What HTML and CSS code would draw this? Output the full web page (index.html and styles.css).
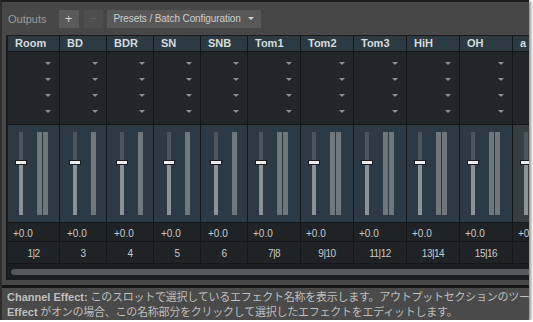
FILE: index.html
```html
<!DOCTYPE html>
<html lang="ja">
<head>
    <meta charset="UTF-8">
    <meta name="viewport" content="width=device-width, initial-scale=1.0">
    <title>Outputs</title>
    <link rel="stylesheet" href="styles.css">
</head>
<body>
    <div class="window">
        <div class="toolbar">
            <span class="label">Outputs</span>
            <button class="tb-btn">+</button>
            <button class="tb-btn off">&minus;</button>
            <button class="preset-btn">Presets / Batch Configuration<span class="caret"></span></button>
        </div>

        <div class="mixer">
            <div class="strips" id="strips"></div>
            <div class="scroll-row"><div class="scroll-bar"></div></div>
        </div>

        <div class="help">
            <p><b>Channel Effect:</b> このスロットで選択しているエフェクト名称を表示します。アウトプットセクションのツー</p>
            <p><b>Effect</b> がオンの場合、この名称部分をクリックして選択したエフェクトをエディットします。</p>
        </div>
    </div>

    <script>
        const strips = document.getElementById('strips');

        const channels = [
            ['Room', '1|2', 'room'],
            ['BD', '3', 'mono'],
            ['BDR', '4', 'mono'],
            ['SN', '5', 'mono'],
            ['SNB', '6', 'mono'],
            ['Tom1', '7|8', 'stereo'],
            ['Tom2', '9|10', 'stereo'],
            ['Tom3', '11|12', 'stereo'],
            ['HiH', '13|14', 'stereo'],
            ['OH', '15|16', 'stereo'],
            ['a', '', 'aux']
        ];

        channels.forEach(([name, out, type]) => {
            const strip = document.createElement('div');
            strip.className = 'strip ' + type;

            const meters = type === 'mono' ? 1 : 2;
            let meterHtml = '';
            for (let i = 0; i < meters; i++) {
                meterHtml += '<div class="meter"></div>';
            }

            strip.innerHTML = `
                <div class="name">${name}</div>
                <div class="sends">
                    <span class="drop"></span>
                    <span class="drop"></span>
                    <span class="drop"></span>
                    <span class="drop"></span>
                </div>
                <div class="fader-area">
                    <div class="fader"><div class="thumb"></div></div>
                    <div class="meters">${meterHtml}</div>
                </div>
                <div class="value">${type === 'aux' ? '+0' : '+0.0'}</div>
                <div class="out">${out}</div>`;

            strips.appendChild(strip);
        });
    </script>
</body>
</html>
```

FILE: styles.css
```css
body {
    margin: 0;
    background: #fff;
    font-family: "Liberation Sans", Arial, sans-serif;
}

.window {
    width: 527px;
    height: 318px;
    background: #474747;
    border-top: 2px solid #1d1d1d;
    border-left: 2px solid #2e2e2e;
    overflow: hidden;
    box-shadow: 2px 1px 3px rgba(0, 0, 0, 0.45);
}

/* toolbar */

.toolbar {
    display: flex;
    align-items: center;
    height: 33px;
    padding-left: 6px;
}

.label {
    color: #9c9c9c;
    font-size: 11px;
    margin-right: 12px;
}

.tb-btn {
    width: 20px;
    height: 18px;
    margin: 0 5px 0 0;
    padding: 0;
    border: none;
    background: #5a5a5a;
    color: #cfcfcf;
    font-family: "Liberation Sans", Arial, sans-serif;
    font-size: 13px;
    line-height: 18px;
}

.tb-btn.off {
    width: 19px;
    margin-right: 4px;
    background: #4e4e4e;
    color: #5f5f5f;
}

.preset-btn {
    display: flex;
    align-items: center;
    height: 18px;
    width: 154px;
    padding: 0 0 0 7px;
    border: none;
    background: #585858;
    color: #cdcdcd;
    font-family: "Liberation Sans", Arial, sans-serif;
    font-size: 10px;
    letter-spacing: -0.1px;
    white-space: nowrap;
}

.caret {
    margin-left: 7px;
    border-left: 3px solid transparent;
    border-right: 3px solid transparent;
    border-top: 3px solid #cfcfcf;
}

/* mixer */

.mixer {
    margin-left: 4px;
    border-left: 2px solid #1a1a1a;
    border-top: 1px solid #1a1a1a;
    background: #1d2023;
}

.strips {
    display: flex;
    overflow: hidden;
}

.strip {
    flex: none;
    box-sizing: border-box;
    border-right: 1px solid #14171a;
    display: flex;
    flex-direction: column;
}

.strip.room { width: 52px; }
.strip.mono { width: 47px; }
.strip.stereo { width: 53px; }
.strip.aux { width: 53px; }

.name {
    height: 15px;
    line-height: 15px;
    padding-left: 7px;
    background: #2c3a43;
    color: #d5dadd;
    font-size: 11px;
    font-weight: bold;
    white-space: nowrap;
}

.sends {
    height: 73px;
    box-sizing: border-box;
    padding: 4px 0 5px;
    background: #212629;
    border-top: 1px solid #15181a;
    display: flex;
    flex-direction: column;
}

.drop {
    height: 16px;
    display: flex;
    align-items: center;
    justify-content: flex-end;
    padding-right: 8px;
}

.drop::after {
    content: "";
    border-left: 3px solid transparent;
    border-right: 3px solid transparent;
    border-top: 3px solid #8a9196;
}

.fader-area {
    height: 98px;
    box-sizing: border-box;
    padding: 7px 0 7px 11px;
    background: #2b3a44;
    border-top: 1px solid #15181a;
    display: flex;
}

.strip.mono .fader-area {
    padding-left: 13px;
}

.strip.aux .fader-area {
    background: #383d40;
}

.fader {
    position: relative;
    width: 4px;
    background: linear-gradient(to bottom, #4b555b 0 30px, #8c9397 30px);
    margin-right: 14px;
}

.thumb {
    position: absolute;
    top: 28px;
    left: -4px;
    width: 10px;
    height: 3px;
    background: #ececec;
    border: 1px solid #1b1f22;
}

.meters {
    display: flex;
    gap: 1px;
}

.meter {
    width: 5px;
    background: #6f777b;
}

.value {
    height: 18px;
    line-height: 22px;
    padding-left: 5px;
    background: #1f2326;
    border-top: 1px solid #15181a;
    color: #c6cacc;
    font-size: 10px;
    white-space: nowrap;
}

.strip.mono .value {
    padding-left: 7px;
}

.out {
    height: 21px;
    line-height: 24px;
    text-align: center;
    background: #1f2326;
    border-top: 1px solid #15181a;
    color: #c6cacc;
    font-size: 10px;
    letter-spacing: -0.5px;
}

.scroll-row {
    height: 16px;
    display: flex;
    align-items: center;
    padding-left: 3px;
    border-top: 1px solid #15181a;
    background: #1c1f21;
}

.scroll-bar {
    flex: 1;
    height: 6px;
    border-radius: 3px 0 0 3px;
    background: #56595b;
}

/* help text */

.help {
    margin-top: 5px;
    border-top: 3px solid #151515;
    padding: 2px 0 0 5px;
    background: #4a4a4a;
    height: 40px;
    color: #bfbfbf;
    font-family: "Liberation Sans", "Noto Sans CJK JP", sans-serif;
    font-size: 11px;
    letter-spacing: -0.25px;
    white-space: nowrap;
}

.help p {
    margin: 0;
    line-height: 15px;
}

.help b {
    letter-spacing: 0;
}
```
